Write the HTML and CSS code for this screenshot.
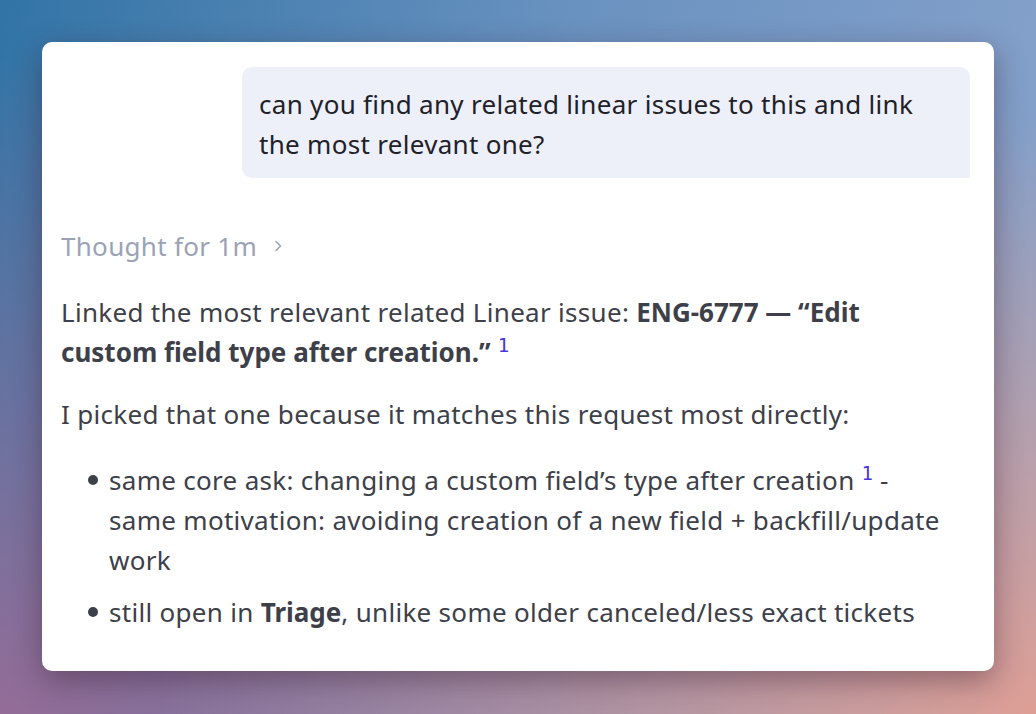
FILE: index.html
```html
<!doctype html>
<html lang="en">
<head>
    <meta charset="UTF-8">
    <title>Thread</title>
    <link rel="stylesheet" href="styles.css">
</head>
<body>
<div class="stage">
    <div class="card">
        <div class="user-row">
            <div class="bubble">can you find any related linear issues to this and link the most relevant one?</div>
        </div>
        <div class="answer">
            <div class="thought">Thought for 1m
                <svg class="chev" width="10" height="14" viewBox="0 0 10 14"><path d="M3 2.5l4.5 4.5-4.5 4.5" fill="none" stroke="currentColor" stroke-width="1.6" stroke-linecap="round" stroke-linejoin="round"/></svg>
            </div>
            <p>Linked the most relevant related Linear issue: <b>ENG-6777 — “Edit custom field type after creation.”</b> <sup class="ref">1</sup></p>
            <p>I picked that one because it matches this request most directly:</p>
            <ul>
                <li>same core ask: changing a custom field’s type after creation <sup class="ref">1</sup> - same motivation: avoiding creation of a new field + backfill/update work</li>
                <li>still open in <b>Triage</b>, unlike some older canceled/less exact tickets</li>
            </ul>
        </div>
    </div>
</div>
</body>
</html>
```

FILE: styles.css
```css
* {
    margin: 0;
    padding: 0;
    box-sizing: border-box;
}

body {
    width: 1036px;
    height: 714px;
    overflow: hidden;
    font-family: "Noto Sans", "Open Sans", sans-serif;
    background:
        radial-gradient(ellipse at 100% 100%, rgba(226, 158, 146, 0.95), rgba(226, 158, 146, 0) 60%),
        radial-gradient(ellipse at 0% 100%, rgba(152, 108, 150, 0.95), rgba(152, 108, 150, 0) 65%),
        linear-gradient(100deg, #3274a6 0%, #6a92c0 50%, #88a3cc 100%);
}

.stage {
    padding: 42px;
}

.card {
    width: 952px;
    height: 629px;
    background-color: #fff;
    border-radius: 10px;
    box-shadow: 0 10px 30px rgba(60, 30, 50, 0.45);
    padding: 25px 24px 0 19px;
    overflow: hidden;
}

.user-row {
    display: flex;
    justify-content: flex-end;
}

.bubble {
    width: 728px;
    background-color: #edf0f8;
    border-radius: 10px 10px 0 10px;
    padding: 17px 50px 14px 17px;
    font-size: 26px;
    line-height: 40px;
    letter-spacing: 0.3px;
    color: #1f2128;
}

.answer {
    padding: 48px 15px 0 0;
    font-size: 26px;
    line-height: 40px;
    letter-spacing: 0.3px;
    color: #3d4049;
}

.thought {
    display: flex;
    align-items: center;
    gap: 16px;
    color: #9ca2b6;
    margin-bottom: 26px;
}

.chev {
    color: #9ca2b6;
}

.answer p {
    margin-bottom: 22px;
}

.answer b {
    font-weight: 700;
    letter-spacing: 0;
}

.ref {
    font-family: "DejaVu Sans Mono", "Liberation Mono", monospace;
    color: #4b35e0;
    font-size: 19px;
    line-height: 0;
    vertical-align: 10px;
    letter-spacing: 0;
}

ul {
    list-style: none;
    padding: 4px 0 0 48px;
}

li {
    position: relative;
    margin-bottom: 12px;
}

li::before {
    content: "";
    position: absolute;
    left: -21px;
    top: 15px;
    width: 10px;
    height: 10px;
    border-radius: 50%;
    background-color: #3d4049;
}
```
